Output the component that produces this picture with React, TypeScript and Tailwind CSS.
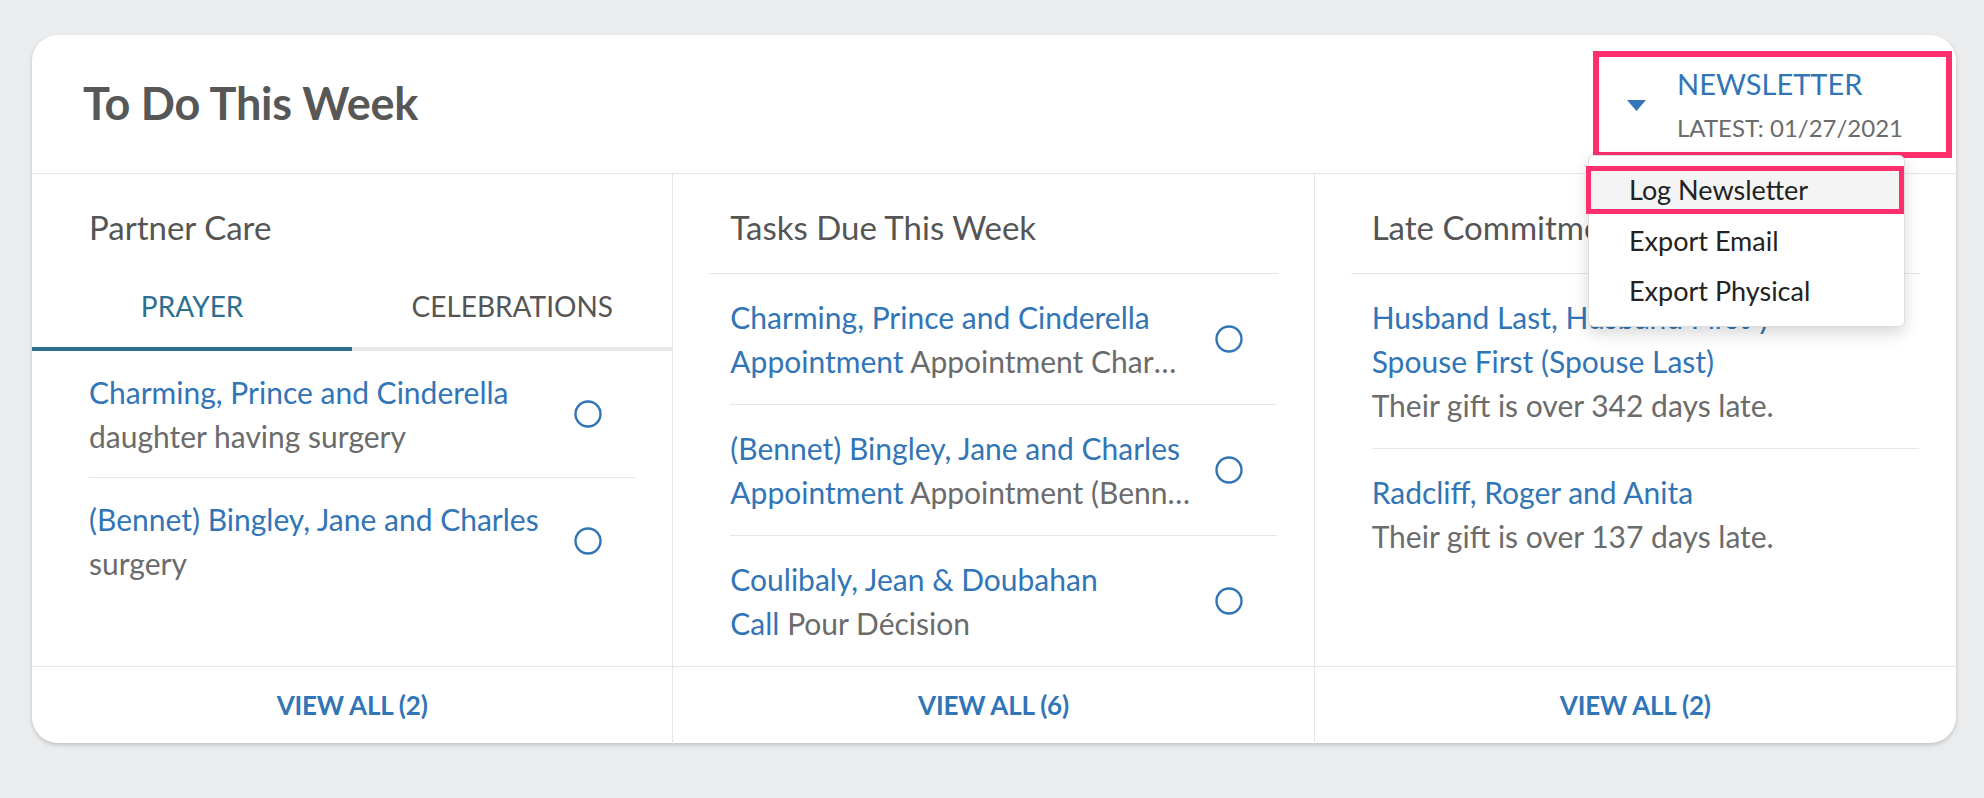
import type { ReactNode } from "react";

type Item = {
  name: ReactNode;
  detail: ReactNode;
  truncate?: boolean;
  check?: boolean;
};

const prayerItems: Item[] = [
  { name: "Charming, Prince and Cinderella", detail: "daughter having surgery", check: true },
  { name: "(Bennet) Bingley, Jane and Charles", detail: "surgery", check: true },
];

const taskItems: Item[] = [
  {
    name: "Charming, Prince and Cinderella",
    detail: (
      <>
        <span className="text-[#3275b6]">Appointment</span> Appointment Charming, Prince and Cinderella
      </>
    ),
    truncate: true,
    check: true,
  },
  {
    name: "(Bennet) Bingley, Jane and Charles",
    detail: (
      <>
        <span className="text-[#3275b6]">Appointment</span> Appointment (Bennet) Bingley, Jane and Charles
      </>
    ),
    truncate: true,
    check: true,
  },
  {
    name: "Coulibaly, Jean & Doubahan",
    detail: (
      <>
        <span className="text-[#3275b6]">Call</span> Pour Décision
      </>
    ),
    truncate: true,
    check: true,
  },
];

const lateItems: Item[] = [
  {
    name: (
      <>
        Husband Last, Husband First y
        <br />
        Spouse First (Spouse Last)
      </>
    ),
    detail: "Their gift is over 342 days late.",
  },
  { name: "Radcliff, Roger and Anita", detail: "Their gift is over 137 days late." },
];

function Circle() {
  return (
    <svg width="28" height="28" viewBox="0 0 28 28" className="shrink-0">
      <circle cx="14" cy="14" r="12.5" fill="none" stroke="#3275b6" strokeWidth="2.4" />
    </svg>
  );
}

function ItemList({ items, pad }: { items: Item[]; pad: string }) {
  return (
    <ul className="ml-[57px] mr-[37px]">
      {items.map((item, i) => (
        <li
          key={i}
          className={`flex items-center ${pad} ${i < items.length - 1 ? "border-b border-[#e6e6e6]" : ""}`}
        >
          <div className="w-[465px] min-w-0 text-[30px] leading-[44px]">
            <div className="text-[#3275b6]">{item.name}</div>
            <div
              className={`text-[#6b6b6b] ${item.truncate ? "whitespace-nowrap overflow-hidden text-ellipsis" : ""}`}
            >
              {item.detail}
            </div>
          </div>
          <div className="ml-[20px] w-[28px] mr-[33px] flex items-center">
            {item.check && <Circle />}
          </div>
        </li>
      ))}
    </ul>
  );
}

function Footer({ count }: { count: number }) {
  return (
    <div className="h-[78px] border-t border-[#e6e6e6] flex items-center justify-center">
      <span className="text-[26px] font-bold text-[#3275b6] tracking-[-0.2px]">
        VIEW ALL ({count})
      </span>
    </div>
  );
}

function ColumnHeader({ title }: { title: string }) {
  return (
    <div className="mx-[36px] pt-[31px] pb-[24px] border-b border-[#e6e6e6]">
      <h2 className="pl-[21px] text-[33px] leading-[44px] text-[#555555]">{title}</h2>
    </div>
  );
}

export default function App() {
  return (
    <div className="min-h-screen bg-[#ebeced] pt-[35px] pl-[32px] font-['Lato',sans-serif]">
      <div className="relative w-[1924px] h-[708px] bg-white rounded-[26px] shadow-[0_2px_4px_rgba(0,0,0,0.18)] flex flex-col">
        <header className="h-[139px] shrink-0 border-b border-[#e6e6e6] flex items-center justify-between pl-[51px] pr-[4px]">
          <h1 className="text-[45px] font-bold text-[#575757] tracking-[-0.2px]">To Do This Week</h1>
          <button className="w-[359px] h-[107px] border-[6px] border-[#ff2f6d] flex items-center text-left">
            <svg width="19" height="11" viewBox="0 0 19 11" className="ml-[28px] mt-[2px]">
              <path d="M0 0 H19 L9.5 11 Z" fill="#3377b8" />
            </svg>
            <div className="ml-[31px] pt-[4px]">
              <div className="text-[29px] leading-[44px] text-[#3275b6]">NEWSLETTER</div>
              <div className="text-[24px] leading-[44px] text-[#6b6b6b]">LATEST: 01/27/2021</div>
            </div>
          </button>
        </header>

        <div className="flex-1 grid grid-cols-3">
          <section className="flex flex-col border-r border-[#e6e6e6]">
            <div className="flex-1">
              <h2 className="pl-[57px] pt-[31px] text-[33px] leading-[44px] text-[#555555]">Partner Care</h2>
              <div className="flex">
                <div className="flex-1 h-[102px] pt-[16px] border-b-4 border-[#2d6f8e] flex items-center justify-center text-[28px] text-[#2d6f8e]">
                  PRAYER
                </div>
                <div className="flex-1 h-[102px] pt-[16px] border-b-4 border-[#e6e6e6] flex items-center justify-center text-[28px] text-[#555555]">
                  CELEBRATIONS
                </div>
              </div>
              <ItemList items={prayerItems} pad="py-[19px]" />
            </div>
            <Footer count={2} />
          </section>

          <section className="flex flex-col border-r border-[#e6e6e6]">
            <div className="flex-1">
              <ColumnHeader title="Tasks Due This Week" />
              <ItemList items={taskItems} pad="py-[21px]" />
            </div>
            <Footer count={6} />
          </section>

          <section className="flex flex-col">
            <div className="flex-1">
              <ColumnHeader title="Late Commitments" />
              <ItemList items={lateItems} pad="py-[21px]" />
            </div>
            <Footer count={2} />
          </section>
        </div>

        <div className="absolute left-[1556px] top-[120px] w-[317px] bg-white rounded-[6px] border border-[#dddddd] shadow-[0_6px_16px_rgba(0,0,0,0.16)] pt-[10px] pb-[10px] text-[27px] text-[#222222]">
          <div className="-ml-[3px] h-[48px] border-[5px] border-[#ff2f6d] bg-[#f4f4f4] flex items-center pl-[38px]">
            Log Newsletter
          </div>
          <div className="mt-[2px] h-[50px] flex items-center pl-[40px]">Export Email</div>
          <div className="h-[50px] flex items-center pl-[40px]">Export Physical</div>
        </div>
      </div>
    </div>
  );
}
